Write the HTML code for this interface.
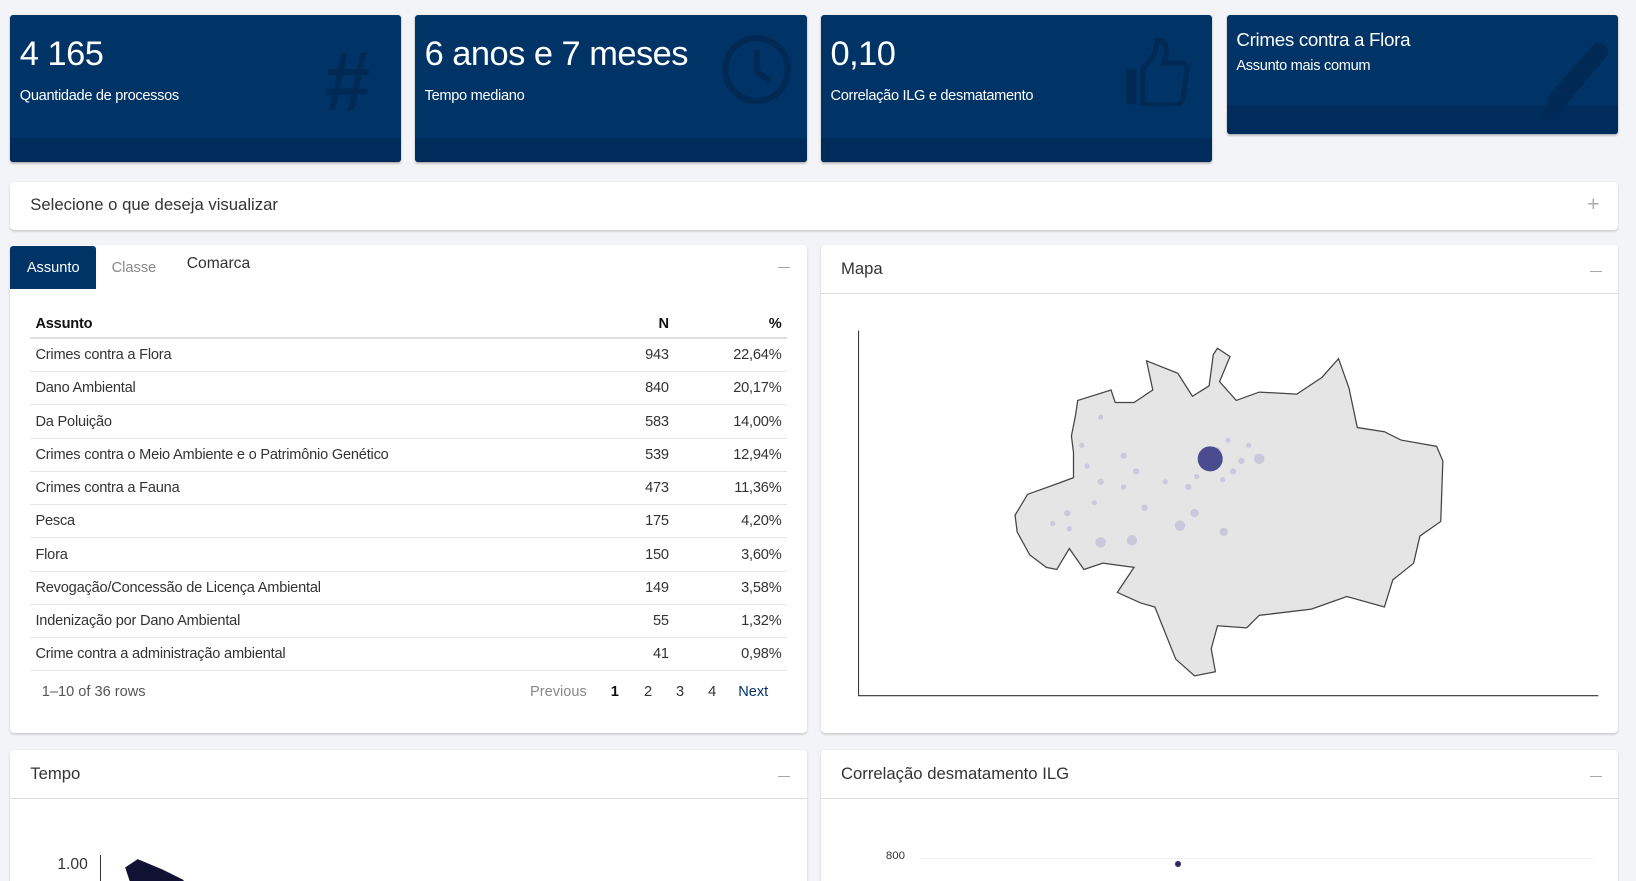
<!DOCTYPE html>
<html><head><meta charset="utf-8">
<style>
html,body{margin:0;padding:0;background:#f3f4f7;overflow:hidden}
body{width:1636px;height:881px}
#w{zoom:1.04337;width:1568px;height:844px;position:relative;font-family:"Liberation Sans",sans-serif;color:#222}
.vb{position:absolute;background:#003366;border-radius:3px;color:#fff;overflow:hidden;box-shadow:0 1px 2px rgba(0,0,0,.3)}
.vb .ft{position:absolute;left:0;right:0;bottom:0;height:23px;background:#002c5c}
.vb .v{position:absolute;left:9px;top:20px;font-size:33px;letter-spacing:-0.5px}
.vb .l{position:absolute;left:9px;top:70px;font-size:14px;letter-spacing:-0.3px}
.card{position:absolute;background:#fff;border-radius:4px;box-shadow:0 1px 2px rgba(0,0,0,.18)}
.hd{position:absolute;left:19px;font-size:16px;color:#333}
.mn{position:absolute;right:16px;width:11px;height:1px;background:#aaa}
table{position:absolute;left:19px;top:64px;width:725px;border-collapse:collapse;font-size:14px;color:#333;letter-spacing:-0.2px}
td,th{height:30.9px;padding:0 5px;border-bottom:1px solid #e6e6e6}
th{font-weight:bold;color:#111;height:24px;border-bottom:2px solid #ddd;text-align:left}
.r{text-align:right}
</style></head><body><div id="w">
<div class="vb" style="left:10px;top:14px;width:374px;height:141px"><div class="ft"></div><div class="v">4 165</div><div class="l">Quantidade de processos</div>
<div style="position:absolute;left:300px;top:18px;font-size:80px;font-weight:bold;color:#002a55;font-style:italic">#</div></div>
<div class="vb" style="left:398px;top:14px;width:375px;height:141px"><div class="ft"></div><div class="v">6 anos e 7 meses</div><div class="l">Tempo mediano</div>
<svg style="position:absolute;left:292px;top:18px" width="70" height="70"><circle cx="35" cy="35" r="30" fill="none" stroke="#002a55" stroke-width="6"/><path d="M35 16V37L48 46" fill="none" stroke="#002a55" stroke-width="6"/></svg></div>
<div class="vb" style="left:787px;top:14px;width:375px;height:141px"><div class="ft"></div><div class="v">0,10</div><div class="l">Correlação ILG e desmatamento</div>
<svg style="position:absolute;left:290px;top:22px" width="70" height="66"><rect x="2" y="30" width="10" height="34" rx="3" fill="#002a55"/><path d="M18 62V30L30 14L32 2Q42 2 40 16L38 24H56Q62 26 60 34L56 60Q54 64 48 64H22Z" fill="none" stroke="#002a55" stroke-width="5"/></svg></div>
<div class="vb" style="left:1176px;top:14px;width:375px;height:114px"><div class="ft" style="height:27px"></div><div style="position:absolute;left:9px;top:14px;font-size:18px;letter-spacing:-0.3px">Crimes contra a Flora</div><div style="position:absolute;left:9px;top:42px;font-size:14px;letter-spacing:-0.3px">Assunto mais comum</div>
<svg style="position:absolute;left:290px;top:18px" width="80" height="90"><path d="M10 86L18 60L60 12Q66 6 72 12Q78 18 72 24L30 74Z" fill="#002a55"/></svg></div>

<div class="card" style="left:10px;top:174px;width:1541px;height:46px"><div class="hd" style="top:13px">Selecione o que deseja visualizar</div><div style="position:absolute;right:18px;top:11px;font-size:20px;color:#aaa">+</div></div>

<div class="card" style="left:10px;top:235px;width:763px;height:468px">
<div style="position:absolute;left:0;top:1px;width:82px;height:41px;background:#003366;border-radius:3px 3px 0 0;color:#fff;font-size:14px;line-height:44px;text-align:center">Assunto</div>
<div style="position:absolute;left:97px;top:14px;font-size:14px;color:#888">Classe</div>
<div style="position:absolute;left:169px;top:9px;font-size:15px;color:#333">Comarca</div>
<div class="mn" style="top:21px"></div>
<table>
<tr><th>Assunto</th><th class="r">N</th><th class="r" style="width:98px">%</th></tr>
<tr><td>Crimes contra a Flora</td><td class="r">943</td><td class="r">22,64%</td></tr>
<tr><td>Dano Ambiental</td><td class="r">840</td><td class="r">20,17%</td></tr>
<tr><td>Da Poluição</td><td class="r">583</td><td class="r">14,00%</td></tr>
<tr><td>Crimes contra o Meio Ambiente e o Patrimônio Genético</td><td class="r">539</td><td class="r">12,94%</td></tr>
<tr><td>Crimes contra a Fauna</td><td class="r">473</td><td class="r">11,36%</td></tr>
<tr><td>Pesca</td><td class="r">175</td><td class="r">4,20%</td></tr>
<tr><td>Flora</td><td class="r">150</td><td class="r">3,60%</td></tr>
<tr><td>Revogação/Concessão de Licença Ambiental</td><td class="r">149</td><td class="r">3,58%</td></tr>
<tr><td>Indenização por Dano Ambiental</td><td class="r">55</td><td class="r">1,32%</td></tr>
<tr><td>Crime contra a administração ambiental</td><td class="r">41</td><td class="r">0,98%</td></tr>
</table>
<div style="position:absolute;left:30px;top:421px;font-size:14px;color:#555">1–10 of 36 rows</div>
<div style="position:absolute;left:498px;top:421px;font-size:14px;color:#888;word-spacing:0">Previous<span style="color:#111;font-weight:bold;margin-left:23px">1</span><span style="color:#333;margin-left:24px">2</span><span style="color:#333;margin-left:23px">3</span><span style="color:#333;margin-left:23px">4</span><span style="color:#003366;margin-left:21px">Next</span></div>
</div>

<div class="card" style="left:787px;top:235px;width:764px;height:468px">
<div class="hd" style="top:13px">Mapa</div><div class="mn" style="top:25px"></div>
<div style="position:absolute;left:0;right:0;top:46px;height:1px;background:#ddd"></div>
<svg style="position:absolute;left:0;top:47px" width="764" height="420">
<path d="M36 35V385H745" fill="none" stroke="#333" stroke-width="1"/>
<path d="M312 64L342 76L356 98L372 88L376 58L380 52L392 60L382 84L398 102L420 94L456 96L480 80L496 62L506 90L514 128L540 132L556 140L590 146L596 160L594 218L574 232L568 258L548 274L540 300L504 290L470 302L420 308L408 320L380 318L374 340L378 362L358 366L340 350L320 300L306 296L284 286L300 262L270 258L252 264L238 244L226 264L216 262L200 250L188 228L186 212L198 192L226 182L242 176L242 152L240 136L244 116L246 102L278 92L282 104L300 104L318 92L312 64Z" fill="#e5e5e5" stroke="#444" stroke-width="1.2"/>
<g fill="#c9c9db"><circle cx="290" cy="155" r="3"/><circle cx="302" cy="170" r="3"/><circle cx="268" cy="238" r="5"/><circle cx="298" cy="236" r="5"/><circle cx="344" cy="222" r="5"/><circle cx="358" cy="210" r="4"/><circle cx="386" cy="228" r="4"/><circle cx="420" cy="158" r="5"/><circle cx="395" cy="170" r="3"/><circle cx="352" cy="185" r="3"/><circle cx="310" cy="205" r="3"/><circle cx="236" cy="210" r="3"/><circle cx="268" cy="180" r="3"/><circle cx="380" cy="150" r="3"/><circle cx="403" cy="160" r="3"/><circle cx="255" cy="165" r="2.5"/><circle cx="262" cy="200" r="2.5"/><circle cx="238" cy="225" r="2.5"/><circle cx="222" cy="220" r="2.5"/><circle cx="268" cy="118" r="2.5"/><circle cx="290" cy="185" r="2.5"/><circle cx="330" cy="180" r="2.5"/><circle cx="390" cy="140" r="2.5"/><circle cx="410" cy="145" r="2.5"/><circle cx="360" cy="175" r="2.5"/><circle cx="385" cy="178" r="2.5"/><circle cx="250" cy="145" r="2.5"/></g>
<circle cx="373" cy="158" r="12" fill="#4b4b8f"/>
</svg></div>

<div class="card" style="left:10px;top:719px;width:763px;height:140px">
<div class="hd" style="top:13px">Tempo</div><div class="mn" style="top:25px"></div>
<div style="position:absolute;left:0;right:0;top:46px;height:1px;background:#ddd"></div>
<div style="position:absolute;left:45px;top:101px;font-size:15px;color:#333">1.00</div>
<div style="position:absolute;left:86px;top:100px;width:1px;height:30px;background:#333"></div>
<svg style="position:absolute;left:106px;top:100px" width="70" height="30"><path d="M4 12L16 4L40 14L60 24V30H10Z" fill="#111133"/></svg>
</div>
<div class="card" style="left:787px;top:719px;width:764px;height:140px">
<div class="hd" style="top:13px">Correlação desmatamento ILG</div><div class="mn" style="top:25px"></div>
<div style="position:absolute;left:0;right:0;top:46px;height:1px;background:#ddd"></div>
<div style="position:absolute;left:62px;top:96px;font-size:11px;color:#333">800</div>
<div style="position:absolute;left:95px;top:103px;width:645px;height:1px;background:#eee"></div>
<div style="position:absolute;left:339px;top:106px;width:6px;height:6px;border-radius:3px;background:#2a2a6a"></div>
</div>
</div></body></html>
